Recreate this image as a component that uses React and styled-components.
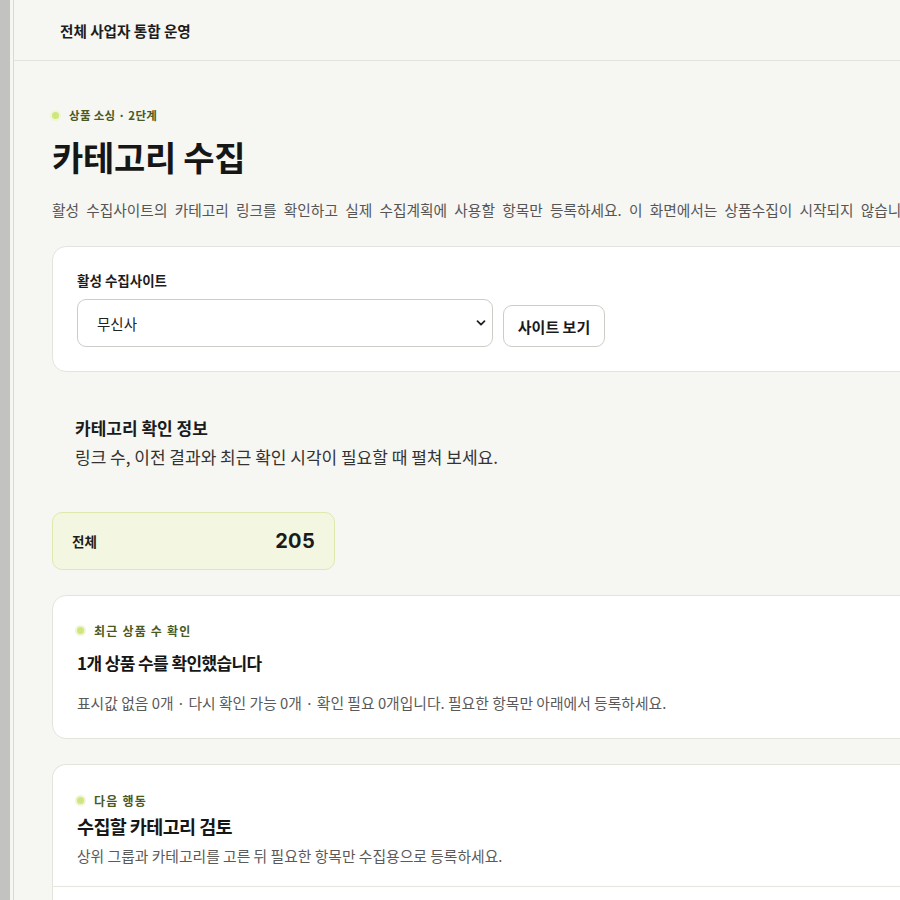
import React from "react";
import styled, { createGlobalStyle } from "styled-components";

const Global = createGlobalStyle`
  html, body { margin: 0; padding: 0; background: #f6f6f2; overflow: hidden; }
  body { font-family: "Noto Sans CJK KR", "Noto Sans", sans-serif; color: #1b1b1b; }
  * { box-sizing: border-box; }
`;

const Frame = styled.div`
  display: flex;
  width: 1200px;
  min-height: 900px;
  background: #f6f6f2;
`;

const Rail = styled.div`
  width: 10px;
  flex: none;
  background: #c2c2c0;
  margin-right: 3px;
`;

const Main = styled.main`
  flex: 1;
  border-left: 1px solid #d9d9d5;
  display: flex;
  flex-direction: column;
`;

const Header = styled.header`
  height: 61px;
  display: flex;
  align-items: center;
  padding-left: 46px;
  border-bottom: 1px solid #e3e3de;
  font-size: 14.6px;
  font-weight: 700;
  color: #1d1d1d;
`;

const Content = styled.div`
  padding: 45px 38px 0 38px;
  display: flex;
  flex-direction: column;
`;

const Eyebrow = styled.div`
  display: flex;
  align-items: center;
  gap: 10px;
  height: 18px;
  font-size: ${(p) => p.$size || 12}px;
  font-weight: 700;
  color: #4a5a1f;
  letter-spacing: ${(p) => p.$ls ?? 1.2}px;
`;

const Dot = styled.span`
  width: 7px;
  height: 7px;
  border-radius: 50%;
  background: #cfe67e;
  box-shadow: 0 0 0 2px #eef6d2;
`;

const Title = styled.h1`
  margin: 12px 0 0;
  font-size: 34px;
  line-height: 41px;
  font-weight: 700;
  letter-spacing: -0.3px;
  color: #161616;
`;

const Lead = styled.p`
  margin: 23px 0 0;
  font-size: 14.7px;
  line-height: 20px;
  word-spacing: 4px;
  color: #555;
  white-space: nowrap;
`;

const Card = styled.section`
  margin-top: ${(p) => p.$mt || 26}px;
  background: #fff;
  border: 1px solid #e4e4df;
  border-radius: 14px;
  padding: ${(p) => p.$pad || "24px 24px"};
  display: flex;
  flex-direction: column;
`;

const FieldLabel = styled.label`
  font-size: 13.5px;
  line-height: 18px;
  font-weight: 700;
  color: #1d1d1d;
`;

const FieldRow = styled.div`
  margin-top: 10px;
  display: flex;
  align-items: flex-end;
  gap: 10px;
`;

const SelectBox = styled.div`
  position: relative;
  width: 416px;
  height: 48px;
  border: 1px solid #cdcdc8;
  border-radius: 9px;
  display: flex;
  align-items: center;
  padding-left: 19px;
  font-size: 14.5px;
  color: #222;
  background: #fff;
`;

const Chevron = styled.svg`
  position: absolute;
  right: 5px;
  top: 50%;
  transform: translateY(-50%);
`;

const Button = styled.button`
  height: 42px;
  width: 102px;
  border: 1px solid #cdcdc8;
  border-radius: 9px;
  background: #fff;
  font-family: inherit;
  font-size: 15px;
  font-weight: 700;
  color: #1a1a1a;
  padding: 0;
`;

const Info = styled.div`
  margin-top: 44px;
  padding-left: 23px;
  display: flex;
  flex-direction: column;
`;

const InfoTitle = styled.h2`
  margin: 0;
  font-size: 17px;
  line-height: 24px;
  font-weight: 700;
  color: #1b1b1b;
`;

const InfoText = styled.p`
  margin: 5px 0 0;
  font-size: 17px;
  line-height: 24px;
  color: #333;
`;

const Stat = styled.div`
  margin-top: 43px;
  width: 283px;
  height: 58px;
  border: 1px solid #dfe9ad;
  background: #f3f7e1;
  border-radius: 10px;
  display: flex;
  align-items: center;
  justify-content: space-between;
  padding: 0 19px 0 19px;
`;

const StatLabel = styled.span`
  font-size: 13.5px;
  font-weight: 700;
  color: #1d1d1d;
`;

const StatValue = styled.span`
  font-family: "Inter", "Noto Sans", sans-serif;
  font-size: 20px;
  font-weight: 700;
  letter-spacing: 0.3px;
  color: #1b1b1b;
`;

const CardTitle = styled.h3`
  margin: ${(p) => p.$mt || 12}px 0 0;
  font-size: ${(p) => p.$size || 17}px;
  line-height: 24px;
  font-weight: 700;
  letter-spacing: -0.6px;
  color: #161616;
`;

const CardText = styled.p`
  margin: ${(p) => p.$mt || 18}px 0 0;
  font-size: 14.8px;
  line-height: 20px;
  color: #5a5a5a;
`;

const OpenCard = styled.section`
  margin-top: 25px;
  background: #fff;
  border: 1px solid #e4e4df;
  border-bottom: none;
  border-radius: 14px 14px 0 0;
  display: flex;
  flex-direction: column;
  min-height: 200px;
`;

const CardHead = styled.div`
  padding: 26px 24px 20px;
  border-bottom: 1px solid #e6e6e1;
  display: flex;
  flex-direction: column;
`;

export default function App() {
  return (
    <>
      <Global />
      <Frame>
        <Rail />
        <Main>
          <Header>전체 사업자 통합 운영</Header>
          <Content>
            <Eyebrow $size={11.5} $ls={0.3}>
              <Dot />
              상품 소싱 · 2단계
            </Eyebrow>
            <Title>카테고리 수집</Title>
            <Lead>
              활성 수집사이트의 카테고리 링크를 확인하고 실제 수집계획에 사용할 항목만 등록하세요. 이 화면에서는 상품수집이 시작되지 않습니다.
            </Lead>

            <Card $mt={26} $pad="24px 24px 24px 24px">
              <FieldLabel>활성 수집사이트</FieldLabel>
              <FieldRow>
                <SelectBox>
                  무신사
                  <Chevron width="12" height="12" viewBox="0 0 12 12">
                    <path d="M2.5 4.2 L6 7.7 L9.5 4.2" fill="none" stroke="#222" strokeWidth="1.8" strokeLinecap="round" strokeLinejoin="round" />
                  </Chevron>
                </SelectBox>
                <Button>사이트 보기</Button>
              </FieldRow>
            </Card>

            <Info>
              <InfoTitle>카테고리 확인 정보</InfoTitle>
              <InfoText>링크 수, 이전 결과와 최근 확인 시각이 필요할 때 펼쳐 보세요.</InfoText>
            </Info>

            <Stat>
              <StatLabel>전체</StatLabel>
              <StatValue>205</StatValue>
            </Stat>

            <Card $mt={25} $pad="25px 24px 25px 24px">
              <Eyebrow>
                <Dot />
                최근 상품 수 확인
              </Eyebrow>
              <CardTitle>1개 상품 수를 확인했습니다</CardTitle>
              <CardText>
                표시값 없음 0개 · 다시 확인 가능 0개 · 확인 필요 0개입니다. 필요한 항목만 아래에서 등록하세요.
              </CardText>
            </Card>

            <OpenCard>
              <CardHead>
                <Eyebrow>
                  <Dot />
                  다음 행동
                </Eyebrow>
                <CardTitle $mt={5} $size={18.5}>수집할 카테고리 검토</CardTitle>
                <CardText $mt={8}>상위 그룹과 카테고리를 고른 뒤 필요한 항목만 수집용으로 등록하세요.</CardText>
              </CardHead>
            </OpenCard>
          </Content>
        </Main>
      </Frame>
    </>
  );
}
